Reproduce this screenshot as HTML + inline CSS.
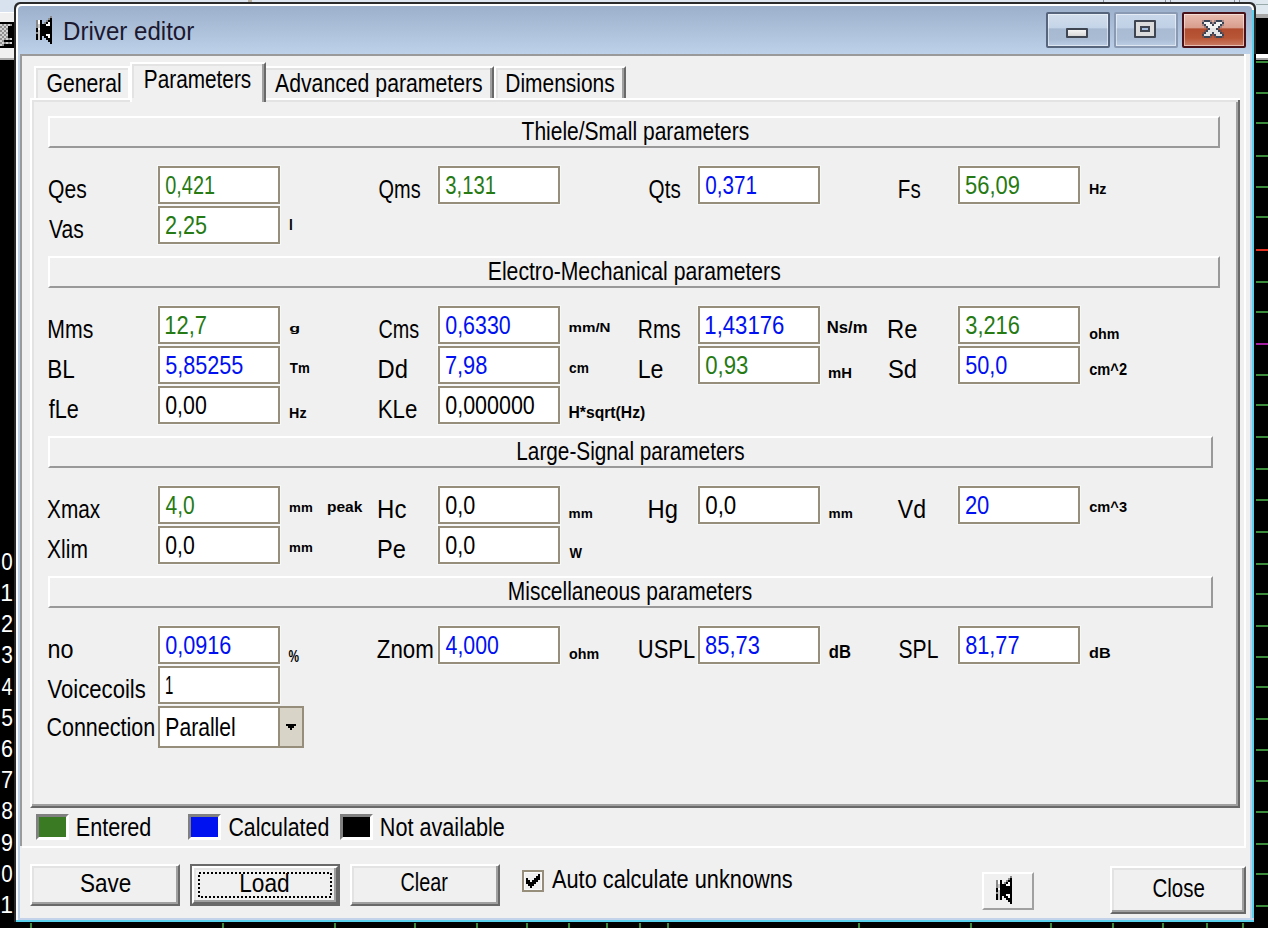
<!DOCTYPE html>
<html><head><meta charset="utf-8"><title>Driver editor</title>
<style>
html,body{margin:0;padding:0;}
body{width:1268px;height:928px;position:relative;overflow:hidden;background:#000;font-family:"Liberation Sans",sans-serif;}
body>div,body>svg{position:absolute;}
#txt{position:absolute;left:0;top:0;}
</style></head><body>
<div style="left:0px;top:0px;width:1268px;height:12px;background:#d8e2ee"></div>
<div style="left:14px;top:0px;width:1242px;height:2px;background:#dde6f0"></div>
<div style="left:248px;top:0px;width:4px;height:2px;background:#b8b0a0"></div>
<div style="left:1103px;top:0px;width:1px;height:2px;background:#8890a0"></div>
<div style="left:1165px;top:0px;width:1px;height:2px;background:#8890a0"></div>
<div style="left:1170px;top:0px;width:1px;height:2px;background:#8890a0"></div>
<div style="left:1234px;top:0px;width:1px;height:2px;background:#8890a0"></div>
<div style="left:1239px;top:0px;width:1px;height:2px;background:#8890a0"></div>
<div style="left:0px;top:12px;width:14px;height:10px;background:#f0f0f0;border-top:1px solid #fff"></div>
<div style="left:0px;top:48px;width:14px;height:10px;background:#f0f0f0"></div>
<div style="left:0px;top:58px;width:14px;height:2px;background:#a8a8a8"></div>
<div style="left:0px;top:22px;width:14px;height:26px;background:#000"></div>
<div style="left:0px;top:24px;width:2px;height:2px;background:#d2d2d2"></div>
<div style="left:2px;top:24px;width:2px;height:2px;background:#909090"></div>
<div style="left:4px;top:24px;width:2px;height:2px;background:#d2d2d2"></div>
<div style="left:6px;top:24px;width:2px;height:2px;background:#909090"></div>
<div style="left:0px;top:26px;width:2px;height:2px;background:#909090"></div>
<div style="left:2px;top:26px;width:2px;height:2px;background:#d2d2d2"></div>
<div style="left:4px;top:26px;width:2px;height:2px;background:#909090"></div>
<div style="left:6px;top:26px;width:2px;height:2px;background:#d2d2d2"></div>
<div style="left:0px;top:28px;width:2px;height:2px;background:#d2d2d2"></div>
<div style="left:2px;top:28px;width:2px;height:2px;background:#909090"></div>
<div style="left:4px;top:28px;width:2px;height:2px;background:#d2d2d2"></div>
<div style="left:6px;top:28px;width:2px;height:2px;background:#909090"></div>
<div style="left:0px;top:30px;width:2px;height:2px;background:#909090"></div>
<div style="left:2px;top:30px;width:2px;height:2px;background:#d2d2d2"></div>
<div style="left:4px;top:30px;width:2px;height:2px;background:#909090"></div>
<div style="left:6px;top:30px;width:2px;height:2px;background:#d2d2d2"></div>
<div style="left:0px;top:32px;width:2px;height:2px;background:#d2d2d2"></div>
<div style="left:2px;top:32px;width:2px;height:2px;background:#909090"></div>
<div style="left:4px;top:32px;width:2px;height:2px;background:#d2d2d2"></div>
<div style="left:6px;top:32px;width:2px;height:2px;background:#909090"></div>
<div style="left:0px;top:34px;width:2px;height:2px;background:#909090"></div>
<div style="left:2px;top:34px;width:2px;height:2px;background:#d2d2d2"></div>
<div style="left:4px;top:34px;width:2px;height:2px;background:#909090"></div>
<div style="left:6px;top:34px;width:2px;height:2px;background:#d2d2d2"></div>
<div style="left:0px;top:36px;width:2px;height:2px;background:#d2d2d2"></div>
<div style="left:2px;top:36px;width:2px;height:2px;background:#909090"></div>
<div style="left:4px;top:36px;width:2px;height:2px;background:#d2d2d2"></div>
<div style="left:6px;top:36px;width:2px;height:2px;background:#909090"></div>
<div style="left:0px;top:38px;width:2px;height:2px;background:#909090"></div>
<div style="left:2px;top:38px;width:2px;height:2px;background:#d2d2d2"></div>
<div style="left:4px;top:38px;width:2px;height:2px;background:#909090"></div>
<div style="left:6px;top:38px;width:2px;height:2px;background:#d2d2d2"></div>
<div style="left:0px;top:40px;width:2px;height:2px;background:#d2d2d2"></div>
<div style="left:2px;top:40px;width:2px;height:2px;background:#909090"></div>
<div style="left:0px;top:42px;width:2px;height:2px;background:#909090"></div>
<div style="left:2px;top:42px;width:2px;height:2px;background:#d2d2d2"></div>
<div style="left:0px;top:44px;width:2px;height:2px;background:#d2d2d2"></div>
<div style="left:2px;top:44px;width:2px;height:2px;background:#909090"></div>
<div style="left:8px;top:24px;width:2px;height:2px;background:#d2d2d2"></div>
<div style="left:10px;top:24px;width:2px;height:2px;background:#909090"></div>
<div style="left:4px;top:38px;width:2px;height:2px;background:#909090"></div>
<div style="left:6px;top:38px;width:2px;height:2px;background:#d2d2d2"></div>
<div style="left:8px;top:38px;width:2px;height:2px;background:#909090"></div>
<div style="left:10px;top:38px;width:2px;height:2px;background:#d2d2d2"></div>
<div style="left:4px;top:42px;width:2px;height:2px;background:#909090"></div>
<div style="left:6px;top:42px;width:2px;height:2px;background:#d2d2d2"></div>
<div style="left:8px;top:42px;width:2px;height:2px;background:#909090"></div>
<div style="left:10px;top:42px;width:2px;height:2px;background:#d2d2d2"></div>
<div style="left:1256px;top:0px;width:12px;height:14px;background:#dfe7ef"></div>
<div style="left:1256px;top:4px;width:12px;height:1px;background:#9aa"></div>
<div style="left:1256px;top:14px;width:12px;height:4px;background:#a8a8a8"></div>
<div style="left:1256px;top:54px;width:12px;height:4px;background:#fff"></div>
<div style="left:1256px;top:58px;width:12px;height:2px;background:#a0a0a0"></div>
<div style="left:1256px;top:61px;width:12px;height:2px;background:#3c8a3c"></div>
<div style="left:1256px;top:92px;width:12px;height:2px;background:#3c8a3c"></div>
<div style="left:1256px;top:122px;width:12px;height:2px;background:#3c8a3c"></div>
<div style="left:1256px;top:155px;width:12px;height:2px;background:#3c8a3c"></div>
<div style="left:1256px;top:186px;width:12px;height:2px;background:#3c8a3c"></div>
<div style="left:1256px;top:216px;width:12px;height:2px;background:#3c8a3c"></div>
<div style="left:1256px;top:249px;width:12px;height:2px;background:#e03020"></div>
<div style="left:1256px;top:281px;width:12px;height:2px;background:#3c8a3c"></div>
<div style="left:1256px;top:311px;width:12px;height:2px;background:#3c8a3c"></div>
<div style="left:1256px;top:343px;width:12px;height:2px;background:#a020a0"></div>
<div style="left:1256px;top:374px;width:12px;height:2px;background:#3c8a3c"></div>
<div style="left:1256px;top:404px;width:12px;height:2px;background:#3c8a3c"></div>
<div style="left:1256px;top:436px;width:12px;height:2px;background:#3c8a3c"></div>
<div style="left:1256px;top:468px;width:12px;height:2px;background:#3c8a3c"></div>
<div style="left:1256px;top:499px;width:12px;height:2px;background:#3c8a3c"></div>
<div style="left:1256px;top:531px;width:12px;height:2px;background:#3c8a3c"></div>
<div style="left:1256px;top:563px;width:12px;height:2px;background:#3c8a3c"></div>
<div style="left:1256px;top:593px;width:12px;height:2px;background:#3c8a3c"></div>
<div style="left:1256px;top:625px;width:12px;height:2px;background:#3c8a3c"></div>
<div style="left:1256px;top:656px;width:12px;height:2px;background:#3c8a3c"></div>
<div style="left:1256px;top:686px;width:12px;height:2px;background:#3c8a3c"></div>
<div style="left:1256px;top:718px;width:12px;height:2px;background:#3c8a3c"></div>
<div style="left:1256px;top:749px;width:12px;height:2px;background:#3c8a3c"></div>
<div style="left:1256px;top:780px;width:12px;height:2px;background:#3c8a3c"></div>
<div style="left:1256px;top:811px;width:12px;height:2px;background:#3c8a3c"></div>
<div style="left:1256px;top:843px;width:12px;height:2px;background:#3c8a3c"></div>
<div style="left:1256px;top:873px;width:12px;height:2px;background:#3c8a3c"></div>
<div style="left:1256px;top:905px;width:12px;height:2px;background:#3c8a3c"></div>
<div style="left:30px;top:923px;width:2px;height:5px;background:#3c8a3c"></div>
<div style="left:222px;top:923px;width:2px;height:5px;background:#3c8a3c"></div>
<div style="left:334px;top:923px;width:2px;height:5px;background:#3c8a3c"></div>
<div style="left:414px;top:923px;width:2px;height:5px;background:#3c8a3c"></div>
<div style="left:476px;top:923px;width:2px;height:5px;background:#3c8a3c"></div>
<div style="left:526px;top:923px;width:2px;height:5px;background:#3c8a3c"></div>
<div style="left:568px;top:923px;width:2px;height:5px;background:#3c8a3c"></div>
<div style="left:606px;top:923px;width:2px;height:5px;background:#3c8a3c"></div>
<div style="left:639px;top:923px;width:2px;height:5px;background:#3c8a3c"></div>
<div style="left:667px;top:923px;width:2px;height:5px;background:#3c8a3c"></div>
<div style="left:858px;top:923px;width:2px;height:5px;background:#3c8a3c"></div>
<div style="left:970px;top:923px;width:2px;height:5px;background:#3c8a3c"></div>
<div style="left:1050px;top:923px;width:2px;height:5px;background:#3c8a3c"></div>
<div style="left:1112px;top:923px;width:2px;height:5px;background:#3c8a3c"></div>
<div style="left:1162px;top:923px;width:2px;height:5px;background:#3c8a3c"></div>
<div style="left:1206px;top:923px;width:2px;height:5px;background:#3c8a3c"></div>
<div style="left:1242px;top:923px;width:2px;height:5px;background:#3c8a3c"></div>
<div style="left:14px;top:2px;width:1242px;height:920px;background:#2a2a2a;border-radius:6px 6px 0 0"></div>
<div style="left:16px;top:4px;width:1238px;height:918px;background:#fff;border-radius:5px 5px 0 0"></div>
<div style="left:18px;top:6px;width:1234px;height:916px;background:linear-gradient(#9cb0cc,#bdd1e9 48px,#bfd3ea);border-radius:4px 4px 0 0"></div>
<div style="left:1252px;top:10px;width:2px;height:912px;background:#5ad2ee"></div>
<div style="left:1254px;top:14px;width:2px;height:40px;background:#2a2a2a"></div>
<div style="left:1254px;top:54px;width:2px;height:868px;background:#000"></div>
<div style="left:16px;top:918px;width:1238px;height:2px;background:#c4d2ea"></div>
<div style="left:16px;top:920px;width:1238px;height:2px;background:#5ad2ee"></div>
<div style="left:16px;top:56px;width:2px;height:864px;background:#fafcff"></div>
<div style="left:18px;top:56px;width:2px;height:862px;background:#bcd0e8"></div>
<div style="left:20px;top:54px;width:1230px;height:864px;background:#f0f0f0"></div>
<div style="left:1250px;top:54px;width:2px;height:866px;background:#c0d2ea"></div>
<div style="left:20px;top:54px;width:1224px;height:2px;background:#9a9a9a"></div>
<div style="left:20px;top:54px;width:2px;height:792px;background:#9a9a9a"></div>
<div style="left:22px;top:846px;width:1224px;height:2px;background:#fff"></div>
<div style="left:1244px;top:54px;width:2px;height:794px;background:#fff"></div>
<div style="left:1046px;top:12px;width:64px;height:36px;box-sizing:border-box;border:2px solid #56647c;border-radius:2px;background:linear-gradient(#d2deec 0,#c4d4e8 44%,#a6b9d1 46%,#a9bcd4 80%,#bccee4 100%);box-shadow:inset 0 0 0 1px rgba(255,255,255,0.5)"></div>
<div style="left:1114px;top:12px;width:64px;height:36px;box-sizing:border-box;border:2px solid #8a9ab2;border-radius:2px;background:linear-gradient(#cad8ea 0,#bfd0e6 44%,#a8bbd3 46%,#abbed6 80%,#bccee4 100%);box-shadow:inset 0 0 0 1px rgba(255,255,255,0.5)"></div>
<div style="left:1182px;top:12px;width:64px;height:36px;box-sizing:border-box;border:2px solid #4a1218;border-radius:2px;background:linear-gradient(#e8bcb0 0,#d89c8c 44%,#b24c30 46%,#b85636 75%,#cc7c66 100%);box-shadow:inset 0 0 0 1px rgba(255,255,255,0.5)"></div>
<div style="left:1066px;top:28px;width:22px;height:10px;box-sizing:border-box;border:2px solid #404552;border-radius:1px;background:linear-gradient(#f4f4f4,#d8d8d8)"></div>
<div style="left:1134px;top:20px;width:22px;height:18px;box-sizing:border-box;border:2px solid #404552;border-radius:1px;background:#dcdcdc"></div>
<div style="left:1140px;top:26px;width:10px;height:6px;box-sizing:border-box;border:2px solid #404552;background:#a8c0e0"></div>
<svg style="left:1202px;top:20px;width:22px;height:18px" width="22" height="18" shape-rendering="crispEdges"><rect x="0" y="0" width="2" height="2" fill="rgba(58,70,88,0.35)"/><rect x="2" y="0" width="2" height="2" fill="#3a4658"/><rect x="4" y="0" width="2" height="2" fill="#3a4658"/><rect x="6" y="0" width="2" height="2" fill="#3a4658"/><rect x="8" y="0" width="2" height="2" fill="rgba(58,70,88,0.35)"/><rect x="12" y="0" width="2" height="2" fill="rgba(58,70,88,0.35)"/><rect x="14" y="0" width="2" height="2" fill="#3a4658"/><rect x="16" y="0" width="2" height="2" fill="#3a4658"/><rect x="18" y="0" width="2" height="2" fill="#3a4658"/><rect x="20" y="0" width="2" height="2" fill="rgba(58,70,88,0.35)"/><rect x="0" y="2" width="2" height="2" fill="#3a4658"/><rect x="2" y="2" width="2" height="2" fill="#f2f2f2"/><rect x="4" y="2" width="2" height="2" fill="#f2f2f2"/><rect x="6" y="2" width="2" height="2" fill="#f2f2f2"/><rect x="8" y="2" width="2" height="2" fill="#3a4658"/><rect x="10" y="2" width="2" height="2" fill="rgba(58,70,88,0.35)"/><rect x="12" y="2" width="2" height="2" fill="#3a4658"/><rect x="14" y="2" width="2" height="2" fill="#f2f2f2"/><rect x="16" y="2" width="2" height="2" fill="#f2f2f2"/><rect x="18" y="2" width="2" height="2" fill="#f2f2f2"/><rect x="20" y="2" width="2" height="2" fill="#3a4658"/><rect x="0" y="4" width="2" height="2" fill="rgba(58,70,88,0.35)"/><rect x="2" y="4" width="2" height="2" fill="#3a4658"/><rect x="4" y="4" width="2" height="2" fill="#f2f2f2"/><rect x="6" y="4" width="2" height="2" fill="#f2f2f2"/><rect x="8" y="4" width="2" height="2" fill="#f2f2f2"/><rect x="10" y="4" width="2" height="2" fill="#3a4658"/><rect x="12" y="4" width="2" height="2" fill="#f2f2f2"/><rect x="14" y="4" width="2" height="2" fill="#f2f2f2"/><rect x="16" y="4" width="2" height="2" fill="#f2f2f2"/><rect x="18" y="4" width="2" height="2" fill="#3a4658"/><rect x="20" y="4" width="2" height="2" fill="rgba(58,70,88,0.35)"/><rect x="2" y="6" width="2" height="2" fill="rgba(58,70,88,0.35)"/><rect x="4" y="6" width="2" height="2" fill="#3a4658"/><rect x="6" y="6" width="2" height="2" fill="#f2f2f2"/><rect x="8" y="6" width="2" height="2" fill="#f2f2f2"/><rect x="10" y="6" width="2" height="2" fill="#f2f2f2"/><rect x="12" y="6" width="2" height="2" fill="#f2f2f2"/><rect x="14" y="6" width="2" height="2" fill="#f2f2f2"/><rect x="16" y="6" width="2" height="2" fill="#3a4658"/><rect x="18" y="6" width="2" height="2" fill="rgba(58,70,88,0.35)"/><rect x="4" y="8" width="2" height="2" fill="rgba(58,70,88,0.35)"/><rect x="6" y="8" width="2" height="2" fill="#3a4658"/><rect x="8" y="8" width="2" height="2" fill="#e4e4e4"/><rect x="10" y="8" width="2" height="2" fill="#e4e4e4"/><rect x="12" y="8" width="2" height="2" fill="#e4e4e4"/><rect x="14" y="8" width="2" height="2" fill="#3a4658"/><rect x="16" y="8" width="2" height="2" fill="rgba(58,70,88,0.35)"/><rect x="2" y="10" width="2" height="2" fill="rgba(58,70,88,0.35)"/><rect x="4" y="10" width="2" height="2" fill="#3a4658"/><rect x="6" y="10" width="2" height="2" fill="#e4e4e4"/><rect x="8" y="10" width="2" height="2" fill="#e4e4e4"/><rect x="10" y="10" width="2" height="2" fill="#e4e4e4"/><rect x="12" y="10" width="2" height="2" fill="#e4e4e4"/><rect x="14" y="10" width="2" height="2" fill="#e4e4e4"/><rect x="16" y="10" width="2" height="2" fill="#3a4658"/><rect x="18" y="10" width="2" height="2" fill="rgba(58,70,88,0.35)"/><rect x="0" y="12" width="2" height="2" fill="rgba(58,70,88,0.35)"/><rect x="2" y="12" width="2" height="2" fill="#3a4658"/><rect x="4" y="12" width="2" height="2" fill="#e4e4e4"/><rect x="6" y="12" width="2" height="2" fill="#e4e4e4"/><rect x="8" y="12" width="2" height="2" fill="#e4e4e4"/><rect x="10" y="12" width="2" height="2" fill="#3a4658"/><rect x="12" y="12" width="2" height="2" fill="#e4e4e4"/><rect x="14" y="12" width="2" height="2" fill="#e4e4e4"/><rect x="16" y="12" width="2" height="2" fill="#e4e4e4"/><rect x="18" y="12" width="2" height="2" fill="#3a4658"/><rect x="20" y="12" width="2" height="2" fill="rgba(58,70,88,0.35)"/><rect x="0" y="14" width="2" height="2" fill="#3a4658"/><rect x="2" y="14" width="2" height="2" fill="#e4e4e4"/><rect x="4" y="14" width="2" height="2" fill="#e4e4e4"/><rect x="6" y="14" width="2" height="2" fill="#e4e4e4"/><rect x="8" y="14" width="2" height="2" fill="#3a4658"/><rect x="10" y="14" width="2" height="2" fill="rgba(58,70,88,0.35)"/><rect x="12" y="14" width="2" height="2" fill="#3a4658"/><rect x="14" y="14" width="2" height="2" fill="#e4e4e4"/><rect x="16" y="14" width="2" height="2" fill="#e4e4e4"/><rect x="18" y="14" width="2" height="2" fill="#e4e4e4"/><rect x="20" y="14" width="2" height="2" fill="#3a4658"/><rect x="0" y="16" width="2" height="2" fill="rgba(58,70,88,0.35)"/><rect x="2" y="16" width="2" height="2" fill="#3a4658"/><rect x="4" y="16" width="2" height="2" fill="#3a4658"/><rect x="6" y="16" width="2" height="2" fill="#3a4658"/><rect x="8" y="16" width="2" height="2" fill="rgba(58,70,88,0.35)"/><rect x="12" y="16" width="2" height="2" fill="rgba(58,70,88,0.35)"/><rect x="14" y="16" width="2" height="2" fill="#3a4658"/><rect x="16" y="16" width="2" height="2" fill="#3a4658"/><rect x="18" y="16" width="2" height="2" fill="#3a4658"/><rect x="20" y="16" width="2" height="2" fill="rgba(58,70,88,0.35)"/></svg>
<svg style="left:36px;top:16px;width:16px;height:28px" width="16" height="28" shape-rendering="crispEdges"><rect x="14" y="0" width="2" height="2" fill="#8a8a8a"/><rect x="12" y="2" width="2" height="2" fill="#8a8a8a"/><rect x="14" y="2" width="2" height="2" fill="#000"/><rect x="0" y="4" width="2" height="2" fill="#888"/><rect x="2" y="4" width="2" height="2" fill="#fff"/><rect x="4" y="4" width="2" height="2" fill="#000"/><rect x="10" y="4" width="2" height="2" fill="#8a8a8a"/><rect x="12" y="4" width="2" height="2" fill="#000"/><rect x="14" y="4" width="2" height="2" fill="#000"/><rect x="0" y="6" width="2" height="2" fill="#888"/><rect x="2" y="6" width="2" height="2" fill="#fff"/><rect x="4" y="6" width="2" height="2" fill="#000"/><rect x="8" y="6" width="2" height="2" fill="#8a8a8a"/><rect x="10" y="6" width="2" height="2" fill="#000"/><rect x="12" y="6" width="2" height="2" fill="#fff"/><rect x="14" y="6" width="2" height="2" fill="#000"/><rect x="0" y="8" width="2" height="2" fill="#888"/><rect x="2" y="8" width="2" height="2" fill="#c8c8c8"/><rect x="4" y="8" width="2" height="2" fill="#000"/><rect x="6" y="8" width="2" height="2" fill="#000"/><rect x="8" y="8" width="2" height="2" fill="#000"/><rect x="10" y="8" width="2" height="2" fill="#fff"/><rect x="12" y="8" width="2" height="2" fill="#fff"/><rect x="14" y="8" width="2" height="2" fill="#000"/><rect x="0" y="10" width="2" height="2" fill="#888"/><rect x="2" y="10" width="2" height="2" fill="#c8c8c8"/><rect x="4" y="10" width="2" height="2" fill="#000"/><rect x="6" y="10" width="2" height="2" fill="#000"/><rect x="8" y="10" width="2" height="2" fill="#000"/><rect x="10" y="10" width="2" height="2" fill="#000"/><rect x="12" y="10" width="2" height="2" fill="#000"/><rect x="14" y="10" width="2" height="2" fill="#000"/><rect x="0" y="12" width="2" height="2" fill="#000"/><rect x="2" y="12" width="2" height="2" fill="#fff"/><rect x="4" y="12" width="2" height="2" fill="#000"/><rect x="6" y="12" width="2" height="2" fill="#000"/><rect x="8" y="12" width="2" height="2" fill="#000"/><rect x="10" y="12" width="2" height="2" fill="#000"/><rect x="12" y="12" width="2" height="2" fill="#000"/><rect x="14" y="12" width="2" height="2" fill="#000"/><rect x="0" y="14" width="2" height="2" fill="#000"/><rect x="2" y="14" width="2" height="2" fill="#c8c8c8"/><rect x="4" y="14" width="2" height="2" fill="#000"/><rect x="6" y="14" width="2" height="2" fill="#000"/><rect x="8" y="14" width="2" height="2" fill="#000"/><rect x="10" y="14" width="2" height="2" fill="#000"/><rect x="12" y="14" width="2" height="2" fill="#000"/><rect x="14" y="14" width="2" height="2" fill="#000"/><rect x="0" y="16" width="2" height="2" fill="#888"/><rect x="2" y="16" width="2" height="2" fill="#c8c8c8"/><rect x="4" y="16" width="2" height="2" fill="#000"/><rect x="6" y="16" width="2" height="2" fill="#000"/><rect x="8" y="16" width="2" height="2" fill="#000"/><rect x="10" y="16" width="2" height="2" fill="#000"/><rect x="12" y="16" width="2" height="2" fill="#000"/><rect x="14" y="16" width="2" height="2" fill="#000"/><rect x="0" y="18" width="2" height="2" fill="#000"/><rect x="2" y="18" width="2" height="2" fill="#c8c8c8"/><rect x="4" y="18" width="2" height="2" fill="#000"/><rect x="6" y="18" width="2" height="2" fill="#000"/><rect x="8" y="18" width="2" height="2" fill="#000"/><rect x="10" y="18" width="2" height="2" fill="#fff"/><rect x="12" y="18" width="2" height="2" fill="#fff"/><rect x="14" y="18" width="2" height="2" fill="#000"/><rect x="0" y="20" width="2" height="2" fill="#000"/><rect x="2" y="20" width="2" height="2" fill="#c8c8c8"/><rect x="4" y="20" width="2" height="2" fill="#000"/><rect x="8" y="20" width="2" height="2" fill="#000"/><rect x="10" y="20" width="2" height="2" fill="#000"/><rect x="12" y="20" width="2" height="2" fill="#fff"/><rect x="14" y="20" width="2" height="2" fill="#000"/><rect x="0" y="22" width="2" height="2" fill="#000"/><rect x="2" y="22" width="2" height="2" fill="#c8c8c8"/><rect x="4" y="22" width="2" height="2" fill="#000"/><rect x="10" y="22" width="2" height="2" fill="#000"/><rect x="12" y="22" width="2" height="2" fill="#000"/><rect x="14" y="22" width="2" height="2" fill="#000"/><rect x="12" y="24" width="2" height="2" fill="#000"/><rect x="14" y="24" width="2" height="2" fill="#000"/><rect x="14" y="26" width="2" height="2" fill="#000"/></svg>
<div style="left:30px;top:98px;width:1210px;height:710px;box-sizing:border-box;background:#f0f0f0;border-left:2px solid #fff;border-top:2px solid #fff;border-right:2px solid #696969;border-bottom:2px solid #696969;box-shadow:inset -2px -2px 0 #a0a0a0, inset 2px 2px 0 #e3e3e3"></div>
<div style="left:34px;top:66px;width:96px;height:34px;box-sizing:border-box;background:#f0f0f0;border-left:2px solid #fff;border-top:2px solid #fff;box-shadow:inset 2px 2px 0 #e3e3e3"></div>
<div style="left:128px;top:66px;width:2px;height:34px;background:#fff"></div>
<div style="left:266px;top:66px;width:228px;height:34px;box-sizing:border-box;background:#f0f0f0;border-top:2px solid #fff;border-right:2px solid #696969;box-shadow:inset -2px 0 0 #a0a0a0, inset 0 2px 0 #e3e3e3"></div>
<div style="left:494px;top:66px;width:132px;height:34px;box-sizing:border-box;background:#f0f0f0;border-left:2px solid #fff;border-top:2px solid #fff;border-right:2px solid #696969;box-shadow:inset -2px 0 0 #a0a0a0, inset 2px 2px 0 #e3e3e3"></div>
<div style="left:30px;top:98px;width:1210px;height:2px;background:#fff"></div>
<div style="left:32px;top:100px;width:1206px;height:2px;background:#e3e3e3"></div>
<div style="left:130px;top:62px;width:136px;height:40px;box-sizing:border-box;background:#f0f0f0;border-left:2px solid #fff;border-top:2px solid #fff;border-right:2px solid #696969;box-shadow:inset -2px 0 0 #a0a0a0, inset 2px 2px 0 #e3e3e3"></div>
<div style="left:132px;top:98px;width:130px;height:4px;background:#f0f0f0"></div>
<div style="left:48px;top:116px;width:1172px;height:32px;box-sizing:border-box;border-left:2px solid #fff;border-top:2px solid #fff;border-right:2px solid #999;border-bottom:2px solid #999"></div>
<div style="left:48px;top:256px;width:1172px;height:32px;box-sizing:border-box;border-left:2px solid #fff;border-top:2px solid #fff;border-right:2px solid #999;border-bottom:2px solid #999"></div>
<div style="left:48px;top:436px;width:1165px;height:32px;box-sizing:border-box;border-left:2px solid #fff;border-top:2px solid #fff;border-right:2px solid #999;border-bottom:2px solid #999"></div>
<div style="left:48px;top:576px;width:1165px;height:32px;box-sizing:border-box;border-left:2px solid #fff;border-top:2px solid #fff;border-right:2px solid #999;border-bottom:2px solid #999"></div>
<div style="left:158px;top:166px;width:122px;height:38px;box-sizing:border-box;background:#fff;border:2px solid #968e7a;box-shadow:0 0 0 1px #f7f8fa"></div>
<div style="left:438px;top:166px;width:122px;height:38px;box-sizing:border-box;background:#fff;border:2px solid #968e7a;box-shadow:0 0 0 1px #f7f8fa"></div>
<div style="left:698px;top:166px;width:122px;height:38px;box-sizing:border-box;background:#fff;border:2px solid #968e7a;box-shadow:0 0 0 1px #f7f8fa"></div>
<div style="left:958px;top:166px;width:122px;height:38px;box-sizing:border-box;background:#fff;border:2px solid #968e7a;box-shadow:0 0 0 1px #f7f8fa"></div>
<div style="left:158px;top:206px;width:122px;height:38px;box-sizing:border-box;background:#fff;border:2px solid #968e7a;box-shadow:0 0 0 1px #f7f8fa"></div>
<div style="left:158px;top:306px;width:122px;height:38px;box-sizing:border-box;background:#fff;border:2px solid #968e7a;box-shadow:0 0 0 1px #f7f8fa"></div>
<div style="left:438px;top:306px;width:122px;height:38px;box-sizing:border-box;background:#fff;border:2px solid #968e7a;box-shadow:0 0 0 1px #f7f8fa"></div>
<div style="left:698px;top:306px;width:122px;height:38px;box-sizing:border-box;background:#fff;border:2px solid #968e7a;box-shadow:0 0 0 1px #f7f8fa"></div>
<div style="left:958px;top:306px;width:122px;height:38px;box-sizing:border-box;background:#fff;border:2px solid #968e7a;box-shadow:0 0 0 1px #f7f8fa"></div>
<div style="left:158px;top:346px;width:122px;height:38px;box-sizing:border-box;background:#fff;border:2px solid #968e7a;box-shadow:0 0 0 1px #f7f8fa"></div>
<div style="left:438px;top:346px;width:122px;height:38px;box-sizing:border-box;background:#fff;border:2px solid #968e7a;box-shadow:0 0 0 1px #f7f8fa"></div>
<div style="left:698px;top:346px;width:122px;height:38px;box-sizing:border-box;background:#fff;border:2px solid #968e7a;box-shadow:0 0 0 1px #f7f8fa"></div>
<div style="left:958px;top:346px;width:122px;height:38px;box-sizing:border-box;background:#fff;border:2px solid #968e7a;box-shadow:0 0 0 1px #f7f8fa"></div>
<div style="left:158px;top:386px;width:122px;height:38px;box-sizing:border-box;background:#fff;border:2px solid #968e7a;box-shadow:0 0 0 1px #f7f8fa"></div>
<div style="left:438px;top:386px;width:122px;height:38px;box-sizing:border-box;background:#fff;border:2px solid #968e7a;box-shadow:0 0 0 1px #f7f8fa"></div>
<div style="left:158px;top:486px;width:122px;height:38px;box-sizing:border-box;background:#fff;border:2px solid #968e7a;box-shadow:0 0 0 1px #f7f8fa"></div>
<div style="left:438px;top:486px;width:122px;height:38px;box-sizing:border-box;background:#fff;border:2px solid #968e7a;box-shadow:0 0 0 1px #f7f8fa"></div>
<div style="left:698px;top:486px;width:122px;height:38px;box-sizing:border-box;background:#fff;border:2px solid #968e7a;box-shadow:0 0 0 1px #f7f8fa"></div>
<div style="left:958px;top:486px;width:122px;height:38px;box-sizing:border-box;background:#fff;border:2px solid #968e7a;box-shadow:0 0 0 1px #f7f8fa"></div>
<div style="left:158px;top:526px;width:122px;height:38px;box-sizing:border-box;background:#fff;border:2px solid #968e7a;box-shadow:0 0 0 1px #f7f8fa"></div>
<div style="left:438px;top:526px;width:122px;height:38px;box-sizing:border-box;background:#fff;border:2px solid #968e7a;box-shadow:0 0 0 1px #f7f8fa"></div>
<div style="left:158px;top:626px;width:122px;height:38px;box-sizing:border-box;background:#fff;border:2px solid #968e7a;box-shadow:0 0 0 1px #f7f8fa"></div>
<div style="left:438px;top:626px;width:122px;height:38px;box-sizing:border-box;background:#fff;border:2px solid #968e7a;box-shadow:0 0 0 1px #f7f8fa"></div>
<div style="left:698px;top:626px;width:122px;height:38px;box-sizing:border-box;background:#fff;border:2px solid #968e7a;box-shadow:0 0 0 1px #f7f8fa"></div>
<div style="left:958px;top:626px;width:122px;height:38px;box-sizing:border-box;background:#fff;border:2px solid #968e7a;box-shadow:0 0 0 1px #f7f8fa"></div>
<div style="left:158px;top:666px;width:122px;height:38px;box-sizing:border-box;background:#fff;border:2px solid #968e7a;box-shadow:0 0 0 1px #f7f8fa"></div>
<div style="left:158px;top:706px;width:146px;height:42px;box-sizing:border-box;background:#fff;border:2px solid #968e7a"></div>
<div style="left:278px;top:708px;width:2px;height:38px;background:#968e7a"></div>
<div style="left:280px;top:708px;width:22px;height:38px;background:#d8d5c8"></div>
<div style="left:286px;top:724px;width:10px;height:2px;background:#000"></div>
<div style="left:288px;top:726px;width:6px;height:2px;background:#000"></div>
<div style="left:290px;top:728px;width:2px;height:2px;background:#000"></div>
<div style="left:36px;top:814px;width:33px;height:26px;box-sizing:border-box;background:#3a7a22;border-left:3px solid #808080;border-top:3px solid #808080;border-right:3px solid #fff;border-bottom:3px solid #fff;box-shadow:inset 0 0 0 0px #000"></div>
<div style="left:188px;top:814px;width:33px;height:26px;box-sizing:border-box;background:#0012f0;border-left:3px solid #808080;border-top:3px solid #808080;border-right:3px solid #fff;border-bottom:3px solid #fff;box-shadow:inset 0 0 0 0px #000"></div>
<div style="left:340px;top:814px;width:33px;height:26px;box-sizing:border-box;background:#000;border-left:3px solid #808080;border-top:3px solid #808080;border-right:3px solid #fff;border-bottom:3px solid #fff;box-shadow:inset 0 0 0 0px #000"></div>
<div style="left:30px;top:864px;width:150px;height:42px;box-sizing:border-box;background:#f0f0f0;border-left:2px solid #fff;border-top:2px solid #fff;border-right:2px solid #696969;border-bottom:2px solid #696969;box-shadow:inset -2px -2px 0 #a0a0a0, inset 2px 2px 0 #e3e3e3"></div>
<div style="left:190px;top:864px;width:150px;height:42px;box-sizing:border-box;background:#f0f0f0;border:2px solid #696969"></div>
<div style="left:192px;top:866px;width:146px;height:38px;box-sizing:border-box;background:#f0f0f0;border-left:2px solid #fff;border-top:2px solid #fff;border-right:2px solid #696969;border-bottom:2px solid #696969;box-shadow:inset -2px -2px 0 #a0a0a0, inset 2px 2px 0 #e3e3e3"></div>
<svg style="left:198px;top:872px;width:134px;height:26px" width="134" height="26"><rect x="1" y="1" width="132" height="24" fill="none" stroke="#000" stroke-width="2" stroke-dasharray="2 2"/></svg>
<div style="left:350px;top:864px;width:150px;height:42px;box-sizing:border-box;background:#f0f0f0;border-left:2px solid #fff;border-top:2px solid #fff;border-right:2px solid #696969;border-bottom:2px solid #696969;box-shadow:inset -2px -2px 0 #a0a0a0, inset 2px 2px 0 #e3e3e3"></div>
<div style="left:982px;top:872px;width:52px;height:38px;box-sizing:border-box;background:#f0f0f0;border-left:2px solid #fff;border-top:2px solid #fff;border-right:2px solid #a0a0a0;border-bottom:2px solid #a0a0a0"></div>
<div style="left:1110px;top:866px;width:136px;height:48px;box-sizing:border-box;background:#f0f0f0;border-left:2px solid #fff;border-top:2px solid #fff;border-right:2px solid #696969;border-bottom:2px solid #696969;box-shadow:inset -2px -2px 0 #a0a0a0, inset 2px 2px 0 #e3e3e3"></div>
<svg style="left:996px;top:876px;width:16px;height:28px" width="16" height="28" shape-rendering="crispEdges"><rect x="14" y="0" width="2" height="2" fill="#8a8a8a"/><rect x="12" y="2" width="2" height="2" fill="#8a8a8a"/><rect x="14" y="2" width="2" height="2" fill="#000"/><rect x="0" y="4" width="2" height="2" fill="#888"/><rect x="2" y="4" width="2" height="2" fill="#fff"/><rect x="4" y="4" width="2" height="2" fill="#000"/><rect x="10" y="4" width="2" height="2" fill="#8a8a8a"/><rect x="12" y="4" width="2" height="2" fill="#000"/><rect x="14" y="4" width="2" height="2" fill="#000"/><rect x="0" y="6" width="2" height="2" fill="#888"/><rect x="2" y="6" width="2" height="2" fill="#fff"/><rect x="4" y="6" width="2" height="2" fill="#000"/><rect x="8" y="6" width="2" height="2" fill="#8a8a8a"/><rect x="10" y="6" width="2" height="2" fill="#000"/><rect x="12" y="6" width="2" height="2" fill="#fff"/><rect x="14" y="6" width="2" height="2" fill="#000"/><rect x="0" y="8" width="2" height="2" fill="#888"/><rect x="2" y="8" width="2" height="2" fill="#c8c8c8"/><rect x="4" y="8" width="2" height="2" fill="#000"/><rect x="6" y="8" width="2" height="2" fill="#000"/><rect x="8" y="8" width="2" height="2" fill="#000"/><rect x="10" y="8" width="2" height="2" fill="#fff"/><rect x="12" y="8" width="2" height="2" fill="#fff"/><rect x="14" y="8" width="2" height="2" fill="#000"/><rect x="0" y="10" width="2" height="2" fill="#888"/><rect x="2" y="10" width="2" height="2" fill="#c8c8c8"/><rect x="4" y="10" width="2" height="2" fill="#000"/><rect x="6" y="10" width="2" height="2" fill="#000"/><rect x="8" y="10" width="2" height="2" fill="#000"/><rect x="10" y="10" width="2" height="2" fill="#000"/><rect x="12" y="10" width="2" height="2" fill="#000"/><rect x="14" y="10" width="2" height="2" fill="#000"/><rect x="0" y="12" width="2" height="2" fill="#000"/><rect x="2" y="12" width="2" height="2" fill="#fff"/><rect x="4" y="12" width="2" height="2" fill="#000"/><rect x="6" y="12" width="2" height="2" fill="#000"/><rect x="8" y="12" width="2" height="2" fill="#000"/><rect x="10" y="12" width="2" height="2" fill="#000"/><rect x="12" y="12" width="2" height="2" fill="#000"/><rect x="14" y="12" width="2" height="2" fill="#000"/><rect x="0" y="14" width="2" height="2" fill="#000"/><rect x="2" y="14" width="2" height="2" fill="#c8c8c8"/><rect x="4" y="14" width="2" height="2" fill="#000"/><rect x="6" y="14" width="2" height="2" fill="#000"/><rect x="8" y="14" width="2" height="2" fill="#000"/><rect x="10" y="14" width="2" height="2" fill="#000"/><rect x="12" y="14" width="2" height="2" fill="#000"/><rect x="14" y="14" width="2" height="2" fill="#000"/><rect x="0" y="16" width="2" height="2" fill="#888"/><rect x="2" y="16" width="2" height="2" fill="#c8c8c8"/><rect x="4" y="16" width="2" height="2" fill="#000"/><rect x="6" y="16" width="2" height="2" fill="#000"/><rect x="8" y="16" width="2" height="2" fill="#000"/><rect x="10" y="16" width="2" height="2" fill="#000"/><rect x="12" y="16" width="2" height="2" fill="#000"/><rect x="14" y="16" width="2" height="2" fill="#000"/><rect x="0" y="18" width="2" height="2" fill="#000"/><rect x="2" y="18" width="2" height="2" fill="#c8c8c8"/><rect x="4" y="18" width="2" height="2" fill="#000"/><rect x="6" y="18" width="2" height="2" fill="#000"/><rect x="8" y="18" width="2" height="2" fill="#000"/><rect x="10" y="18" width="2" height="2" fill="#fff"/><rect x="12" y="18" width="2" height="2" fill="#fff"/><rect x="14" y="18" width="2" height="2" fill="#000"/><rect x="0" y="20" width="2" height="2" fill="#000"/><rect x="2" y="20" width="2" height="2" fill="#c8c8c8"/><rect x="4" y="20" width="2" height="2" fill="#000"/><rect x="8" y="20" width="2" height="2" fill="#000"/><rect x="10" y="20" width="2" height="2" fill="#000"/><rect x="12" y="20" width="2" height="2" fill="#fff"/><rect x="14" y="20" width="2" height="2" fill="#000"/><rect x="0" y="22" width="2" height="2" fill="#000"/><rect x="2" y="22" width="2" height="2" fill="#c8c8c8"/><rect x="4" y="22" width="2" height="2" fill="#000"/><rect x="10" y="22" width="2" height="2" fill="#000"/><rect x="12" y="22" width="2" height="2" fill="#000"/><rect x="14" y="22" width="2" height="2" fill="#000"/><rect x="12" y="24" width="2" height="2" fill="#000"/><rect x="14" y="24" width="2" height="2" fill="#000"/><rect x="14" y="26" width="2" height="2" fill="#000"/></svg>
<div style="left:522px;top:870px;width:22px;height:22px;box-sizing:border-box;background:#f0f0f0;border:2px solid #968e7a;box-shadow:inset 0 0 0 1px #fafafa"></div>
<svg style="left:526px;top:874px;width:14px;height:14px" width="14" height="14" shape-rendering="crispEdges"><rect x="12" y="0" width="2" height="2" fill="#000"/><rect x="10" y="2" width="2" height="2" fill="#000"/><rect x="12" y="2" width="2" height="2" fill="#000"/><rect x="0" y="4" width="2" height="2" fill="#000"/><rect x="8" y="4" width="2" height="2" fill="#000"/><rect x="10" y="4" width="2" height="2" fill="#000"/><rect x="12" y="4" width="2" height="2" fill="#000"/><rect x="0" y="6" width="2" height="2" fill="#000"/><rect x="2" y="6" width="2" height="2" fill="#000"/><rect x="6" y="6" width="2" height="2" fill="#000"/><rect x="8" y="6" width="2" height="2" fill="#000"/><rect x="10" y="6" width="2" height="2" fill="#000"/><rect x="0" y="8" width="2" height="2" fill="#000"/><rect x="2" y="8" width="2" height="2" fill="#000"/><rect x="4" y="8" width="2" height="2" fill="#000"/><rect x="6" y="8" width="2" height="2" fill="#000"/><rect x="8" y="8" width="2" height="2" fill="#000"/><rect x="2" y="10" width="2" height="2" fill="#000"/><rect x="4" y="10" width="2" height="2" fill="#000"/><rect x="6" y="10" width="2" height="2" fill="#000"/><rect x="4" y="12" width="2" height="2" fill="#000"/></svg>
<svg id="txt" width="1268" height="928" style="left:0;top:0" font-family="Liberation Sans, sans-serif">
<text x="1.28" y="570.00" font-size="24.71" fill="#fff" font-weight="normal" textLength="11.47" lengthAdjust="spacingAndGlyphs">0</text>
<text x="0.28" y="601.00" font-size="24.71" fill="#fff" font-weight="normal" textLength="12.79" lengthAdjust="spacingAndGlyphs">1</text>
<text x="0.91" y="632.00" font-size="24.71" fill="#fff" font-weight="normal" textLength="12.09" lengthAdjust="spacingAndGlyphs">2</text>
<text x="1.27" y="663.00" font-size="24.71" fill="#fff" font-weight="normal" textLength="11.59" lengthAdjust="spacingAndGlyphs">3</text>
<text x="1.61" y="695.00" font-size="24.71" fill="#fff" font-weight="normal" textLength="10.91" lengthAdjust="spacingAndGlyphs">4</text>
<text x="1.16" y="726.00" font-size="24.71" fill="#fff" font-weight="normal" textLength="11.71" lengthAdjust="spacingAndGlyphs">5</text>
<text x="0.92" y="757.00" font-size="24.71" fill="#fff" font-weight="normal" textLength="11.96" lengthAdjust="spacingAndGlyphs">6</text>
<text x="0.91" y="788.00" font-size="24.71" fill="#fff" font-weight="normal" textLength="12.09" lengthAdjust="spacingAndGlyphs">7</text>
<text x="1.16" y="819.00" font-size="24.71" fill="#fff" font-weight="normal" textLength="11.71" lengthAdjust="spacingAndGlyphs">8</text>
<text x="1.03" y="851.00" font-size="24.71" fill="#fff" font-weight="normal" textLength="11.96" lengthAdjust="spacingAndGlyphs">9</text>
<text x="1.28" y="882.00" font-size="24.71" fill="#fff" font-weight="normal" textLength="11.47" lengthAdjust="spacingAndGlyphs">0</text>
<text x="0.28" y="913.00" font-size="24.71" fill="#fff" font-weight="normal" textLength="12.79" lengthAdjust="spacingAndGlyphs">1</text>
<text x="63.07" y="40.00" font-size="26.16" fill="#1c1830" font-weight="normal" textLength="131.19" lengthAdjust="spacingAndGlyphs">Driver editor</text>
<text x="46.44" y="91.50" font-size="25.44" fill="#000" font-weight="normal" textLength="75.39" lengthAdjust="spacingAndGlyphs">General</text>
<text x="143.84" y="88.00" font-size="25.44" fill="#000" font-weight="normal" textLength="107.36" lengthAdjust="spacingAndGlyphs">Parameters</text>
<text x="275.00" y="91.50" font-size="25.44" fill="#000" font-weight="normal" textLength="207.71" lengthAdjust="spacingAndGlyphs">Advanced parameters</text>
<text x="505.32" y="91.50" font-size="25.44" fill="#000" font-weight="normal" textLength="109.39" lengthAdjust="spacingAndGlyphs">Dimensions</text>
<text x="521.58" y="139.50" font-size="25.44" fill="#000" font-weight="normal" textLength="227.61" lengthAdjust="spacingAndGlyphs">Thiele/Small parameters</text>
<text x="487.81" y="279.50" font-size="25.44" fill="#000" font-weight="normal" textLength="292.92" lengthAdjust="spacingAndGlyphs">Electro-Mechanical parameters</text>
<text x="516.34" y="459.50" font-size="25.44" fill="#000" font-weight="normal" textLength="228.41" lengthAdjust="spacingAndGlyphs">Large-Signal parameters</text>
<text x="507.82" y="599.50" font-size="25.44" fill="#000" font-weight="normal" textLength="244.46" lengthAdjust="spacingAndGlyphs">Miscellaneous parameters</text>
<text x="48.05" y="197.50" font-size="25.44" fill="#000" font-weight="normal" textLength="38.67" lengthAdjust="spacingAndGlyphs">Qes</text>
<text x="165.31" y="194.00" font-size="25.44" fill="#267a14" font-weight="normal" textLength="49.64" lengthAdjust="spacingAndGlyphs">0,421</text>
<text x="378.60" y="197.50" font-size="25.44" fill="#000" font-weight="normal" textLength="42.11" lengthAdjust="spacingAndGlyphs">Qms</text>
<text x="445.29" y="194.00" font-size="25.44" fill="#267a14" font-weight="normal" textLength="50.67" lengthAdjust="spacingAndGlyphs">3,131</text>
<text x="648.57" y="197.50" font-size="25.44" fill="#000" font-weight="normal" textLength="32.17" lengthAdjust="spacingAndGlyphs">Qts</text>
<text x="705.28" y="194.00" font-size="25.44" fill="#0010f0" font-weight="normal" textLength="51.70" lengthAdjust="spacingAndGlyphs">0,371</text>
<text x="897.85" y="197.50" font-size="25.44" fill="#000" font-weight="normal" textLength="22.89" lengthAdjust="spacingAndGlyphs">Fs</text>
<text x="965.12" y="194.00" font-size="25.44" fill="#267a14" font-weight="normal" textLength="54.92" lengthAdjust="spacingAndGlyphs">56,09</text>
<text x="1089.07" y="194.00" font-size="13.81" fill="#000" font-weight="bold" textLength="17.46" lengthAdjust="spacingAndGlyphs">Hz</text>
<text x="49.00" y="237.50" font-size="25.44" fill="#000" font-weight="normal" textLength="34.72" lengthAdjust="spacingAndGlyphs">Vas</text>
<text x="164.92" y="234.00" font-size="25.44" fill="#267a14" font-weight="normal" textLength="41.97" lengthAdjust="spacingAndGlyphs">2,25</text>
<text x="289.10" y="230.00" font-size="13.81" fill="#000" font-weight="bold" textLength="3.83" lengthAdjust="spacingAndGlyphs">l</text>
<text x="47.30" y="337.50" font-size="25.44" fill="#000" font-weight="normal" textLength="45.96" lengthAdjust="spacingAndGlyphs">Mms</text>
<text x="164.36" y="334.00" font-size="25.44" fill="#267a14" font-weight="normal" textLength="42.66" lengthAdjust="spacingAndGlyphs">12,7</text>
<text x="289.29" y="332.00" font-size="10.36" fill="#000" font-weight="bold" textLength="10.89" lengthAdjust="spacingAndGlyphs">g</text>
<text x="378.51" y="337.50" font-size="25.44" fill="#000" font-weight="normal" textLength="40.69" lengthAdjust="spacingAndGlyphs">Cms</text>
<text x="445.25" y="334.00" font-size="25.44" fill="#0010f0" font-weight="normal" textLength="65.47" lengthAdjust="spacingAndGlyphs">0,6330</text>
<text x="568.52" y="332.00" font-size="13.12" fill="#000" font-weight="bold" textLength="42.02" lengthAdjust="spacingAndGlyphs">mm/N</text>
<text x="637.83" y="337.50" font-size="25.44" fill="#000" font-weight="normal" textLength="42.91" lengthAdjust="spacingAndGlyphs">Rms</text>
<text x="704.34" y="334.00" font-size="25.44" fill="#0010f0" font-weight="normal" textLength="80.04" lengthAdjust="spacingAndGlyphs">1,43176</text>
<text x="826.66" y="332.50" font-size="15.88" fill="#000" font-weight="bold" textLength="40.84" lengthAdjust="spacingAndGlyphs">Ns/m</text>
<text x="887.10" y="337.50" font-size="25.44" fill="#000" font-weight="normal" textLength="30.44" lengthAdjust="spacingAndGlyphs">Re</text>
<text x="965.24" y="334.00" font-size="25.44" fill="#267a14" font-weight="normal" textLength="54.69" lengthAdjust="spacingAndGlyphs">3,216</text>
<text x="1089.25" y="339.00" font-size="15.19" fill="#000" font-weight="bold" textLength="30.12" lengthAdjust="spacingAndGlyphs">ohm</text>
<text x="47.20" y="377.50" font-size="25.44" fill="#000" font-weight="normal" textLength="27.55" lengthAdjust="spacingAndGlyphs">BL</text>
<text x="165.13" y="374.00" font-size="25.44" fill="#0010f0" font-weight="normal" textLength="78.23" lengthAdjust="spacingAndGlyphs">5,85255</text>
<text x="289.87" y="372.50" font-size="14.50" fill="#000" font-weight="bold" textLength="19.93" lengthAdjust="spacingAndGlyphs">Tm</text>
<text x="377.60" y="377.50" font-size="25.44" fill="#000" font-weight="normal" textLength="30.41" lengthAdjust="spacingAndGlyphs">Dd</text>
<text x="444.91" y="374.00" font-size="25.44" fill="#0010f0" font-weight="normal" textLength="42.49" lengthAdjust="spacingAndGlyphs">7,98</text>
<text x="569.02" y="373.00" font-size="13.81" fill="#000" font-weight="bold" textLength="19.81" lengthAdjust="spacingAndGlyphs">cm</text>
<text x="637.64" y="377.50" font-size="25.44" fill="#000" font-weight="normal" textLength="25.84" lengthAdjust="spacingAndGlyphs">Le</text>
<text x="705.22" y="374.00" font-size="25.44" fill="#267a14" font-weight="normal" textLength="43.19" lengthAdjust="spacingAndGlyphs">0,93</text>
<text x="828.03" y="378.00" font-size="15.19" fill="#000" font-weight="bold" textLength="23.95" lengthAdjust="spacingAndGlyphs">mH</text>
<text x="887.93" y="377.50" font-size="25.44" fill="#000" font-weight="normal" textLength="29.07" lengthAdjust="spacingAndGlyphs">Sd</text>
<text x="965.13" y="374.00" font-size="25.44" fill="#0010f0" font-weight="normal" textLength="42.15" lengthAdjust="spacingAndGlyphs">50,0</text>
<text x="1089.24" y="374.50" font-size="15.88" fill="#000" font-weight="bold" textLength="37.78" lengthAdjust="spacingAndGlyphs">cm^2</text>
<text x="48.78" y="417.50" font-size="25.44" fill="#000" font-weight="normal" textLength="30.09" lengthAdjust="spacingAndGlyphs">fLe</text>
<text x="165.25" y="414.00" font-size="25.44" fill="#000" font-weight="normal" textLength="41.52" lengthAdjust="spacingAndGlyphs">0,00</text>
<text x="289.07" y="418.00" font-size="15.19" fill="#000" font-weight="bold" textLength="17.46" lengthAdjust="spacingAndGlyphs">Hz</text>
<text x="377.72" y="417.50" font-size="25.44" fill="#000" font-weight="normal" textLength="39.66" lengthAdjust="spacingAndGlyphs">KLe</text>
<text x="445.25" y="414.00" font-size="25.44" fill="#000" font-weight="normal" textLength="89.52" lengthAdjust="spacingAndGlyphs">0,000000</text>
<text x="568.48" y="418.00" font-size="16.57" fill="#000" font-weight="bold" textLength="76.79" lengthAdjust="spacingAndGlyphs">H*sqrt(Hz)</text>
<text x="47.08" y="517.50" font-size="25.44" fill="#000" font-weight="normal" textLength="53.15" lengthAdjust="spacingAndGlyphs">Xmax</text>
<text x="165.58" y="514.00" font-size="25.44" fill="#267a14" font-weight="normal" textLength="29.16" lengthAdjust="spacingAndGlyphs">4,0</text>
<text x="289.14" y="512.00" font-size="12.77" fill="#000" font-weight="bold" textLength="23.64" lengthAdjust="spacingAndGlyphs">mm</text>
<text x="326.99" y="512.00" font-size="13.81" fill="#000" font-weight="bold" textLength="35.42" lengthAdjust="spacingAndGlyphs">peak</text>
<text x="377.08" y="517.50" font-size="25.44" fill="#000" font-weight="normal" textLength="29.32" lengthAdjust="spacingAndGlyphs">Hc</text>
<text x="445.24" y="514.00" font-size="25.44" fill="#000" font-weight="normal" textLength="30.01" lengthAdjust="spacingAndGlyphs">0,0</text>
<text x="568.62" y="517.75" font-size="12.08" fill="#000" font-weight="bold" textLength="24.18" lengthAdjust="spacingAndGlyphs">mm</text>
<text x="647.60" y="517.50" font-size="25.44" fill="#000" font-weight="normal" textLength="30.41" lengthAdjust="spacingAndGlyphs">Hg</text>
<text x="705.22" y="514.00" font-size="25.44" fill="#000" font-weight="normal" textLength="31.07" lengthAdjust="spacingAndGlyphs">0,0</text>
<text x="828.62" y="518.00" font-size="12.43" fill="#000" font-weight="bold" textLength="24.18" lengthAdjust="spacingAndGlyphs">mm</text>
<text x="897.75" y="517.50" font-size="25.44" fill="#000" font-weight="normal" textLength="28.21" lengthAdjust="spacingAndGlyphs">Vd</text>
<text x="964.90" y="514.00" font-size="25.44" fill="#0010f0" font-weight="normal" textLength="24.42" lengthAdjust="spacingAndGlyphs">20</text>
<text x="1089.24" y="512.00" font-size="15.19" fill="#000" font-weight="bold" textLength="37.78" lengthAdjust="spacingAndGlyphs">cm^3</text>
<text x="47.08" y="557.50" font-size="25.44" fill="#000" font-weight="normal" textLength="40.77" lengthAdjust="spacingAndGlyphs">Xlim</text>
<text x="165.26" y="554.00" font-size="25.44" fill="#000" font-weight="normal" textLength="29.49" lengthAdjust="spacingAndGlyphs">0,0</text>
<text x="289.14" y="552.00" font-size="12.77" fill="#000" font-weight="bold" textLength="23.64" lengthAdjust="spacingAndGlyphs">mm</text>
<text x="377.11" y="557.50" font-size="25.44" fill="#000" font-weight="normal" textLength="28.91" lengthAdjust="spacingAndGlyphs">Pe</text>
<text x="445.24" y="554.00" font-size="25.44" fill="#000" font-weight="normal" textLength="30.01" lengthAdjust="spacingAndGlyphs">0,0</text>
<text x="569.50" y="557.75" font-size="15.53" fill="#000" font-weight="bold" textLength="12.48" lengthAdjust="spacingAndGlyphs">W</text>
<text x="47.48" y="657.50" font-size="25.44" fill="#000" font-weight="normal" textLength="26.01" lengthAdjust="spacingAndGlyphs">no</text>
<text x="165.24" y="654.00" font-size="25.44" fill="#0010f0" font-weight="normal" textLength="66.09" lengthAdjust="spacingAndGlyphs">0,0916</text>
<text x="288.51" y="661.50" font-size="15.88" fill="#000" font-weight="bold" textLength="10.52" lengthAdjust="spacingAndGlyphs">%</text>
<text x="376.83" y="657.50" font-size="25.44" fill="#000" font-weight="normal" textLength="57.04" lengthAdjust="spacingAndGlyphs">Znom</text>
<text x="445.57" y="654.00" font-size="25.44" fill="#0010f0" font-weight="normal" textLength="53.22" lengthAdjust="spacingAndGlyphs">4,000</text>
<text x="569.00" y="658.50" font-size="14.84" fill="#000" font-weight="bold" textLength="30.12" lengthAdjust="spacingAndGlyphs">ohm</text>
<text x="637.85" y="657.50" font-size="25.44" fill="#000" font-weight="normal" textLength="57.36" lengthAdjust="spacingAndGlyphs">USPL</text>
<text x="705.12" y="654.00" font-size="25.44" fill="#0010f0" font-weight="normal" textLength="54.81" lengthAdjust="spacingAndGlyphs">85,73</text>
<text x="828.84" y="657.75" font-size="17.61" fill="#000" font-weight="bold" textLength="22.13" lengthAdjust="spacingAndGlyphs">dB</text>
<text x="898.55" y="657.50" font-size="25.44" fill="#000" font-weight="normal" textLength="39.84" lengthAdjust="spacingAndGlyphs">SPL</text>
<text x="965.13" y="654.00" font-size="25.44" fill="#0010f0" font-weight="normal" textLength="54.40" lengthAdjust="spacingAndGlyphs">81,77</text>
<text x="1089.10" y="657.75" font-size="14.84" fill="#000" font-weight="bold" textLength="21.60" lengthAdjust="spacingAndGlyphs">dB</text>
<text x="47.50" y="697.50" font-size="25.44" fill="#000" font-weight="normal" textLength="98.32" lengthAdjust="spacingAndGlyphs">Voicecoils</text>
<text x="164.88" y="694.00" font-size="25.44" fill="#000" font-weight="normal" textLength="8.31" lengthAdjust="spacingAndGlyphs">1</text>
<text x="46.42" y="735.50" font-size="25.44" fill="#000" font-weight="normal" textLength="108.85" lengthAdjust="spacingAndGlyphs">Connection</text>
<text x="165.31" y="735.50" font-size="25.44" fill="#000" font-weight="normal" textLength="70.46" lengthAdjust="spacingAndGlyphs">Parallel</text>
<text x="75.77" y="836.00" font-size="25.44" fill="#000" font-weight="normal" textLength="75.58" lengthAdjust="spacingAndGlyphs">Entered</text>
<text x="228.43" y="836.00" font-size="25.44" fill="#000" font-weight="normal" textLength="100.85" lengthAdjust="spacingAndGlyphs">Calculated</text>
<text x="379.77" y="836.00" font-size="25.44" fill="#000" font-weight="normal" textLength="125.13" lengthAdjust="spacingAndGlyphs">Not available</text>
<text x="79.99" y="891.50" font-size="25.44" fill="#000" font-weight="normal" textLength="51.30" lengthAdjust="spacingAndGlyphs">Save</text>
<text x="239.19" y="891.50" font-size="25.44" fill="#000" font-weight="normal" textLength="50.47" lengthAdjust="spacingAndGlyphs">Load</text>
<text x="400.51" y="891.00" font-size="25.44" fill="#000" font-weight="normal" textLength="47.28" lengthAdjust="spacingAndGlyphs">Clear</text>
<text x="1152.48" y="897.00" font-size="25.44" fill="#000" font-weight="normal" textLength="52.38" lengthAdjust="spacingAndGlyphs">Close</text>
<text x="552.00" y="888.00" font-size="25.44" fill="#000" font-weight="normal" textLength="240.71" lengthAdjust="spacingAndGlyphs">Auto calculate unknowns</text>
</svg>
</body></html>
